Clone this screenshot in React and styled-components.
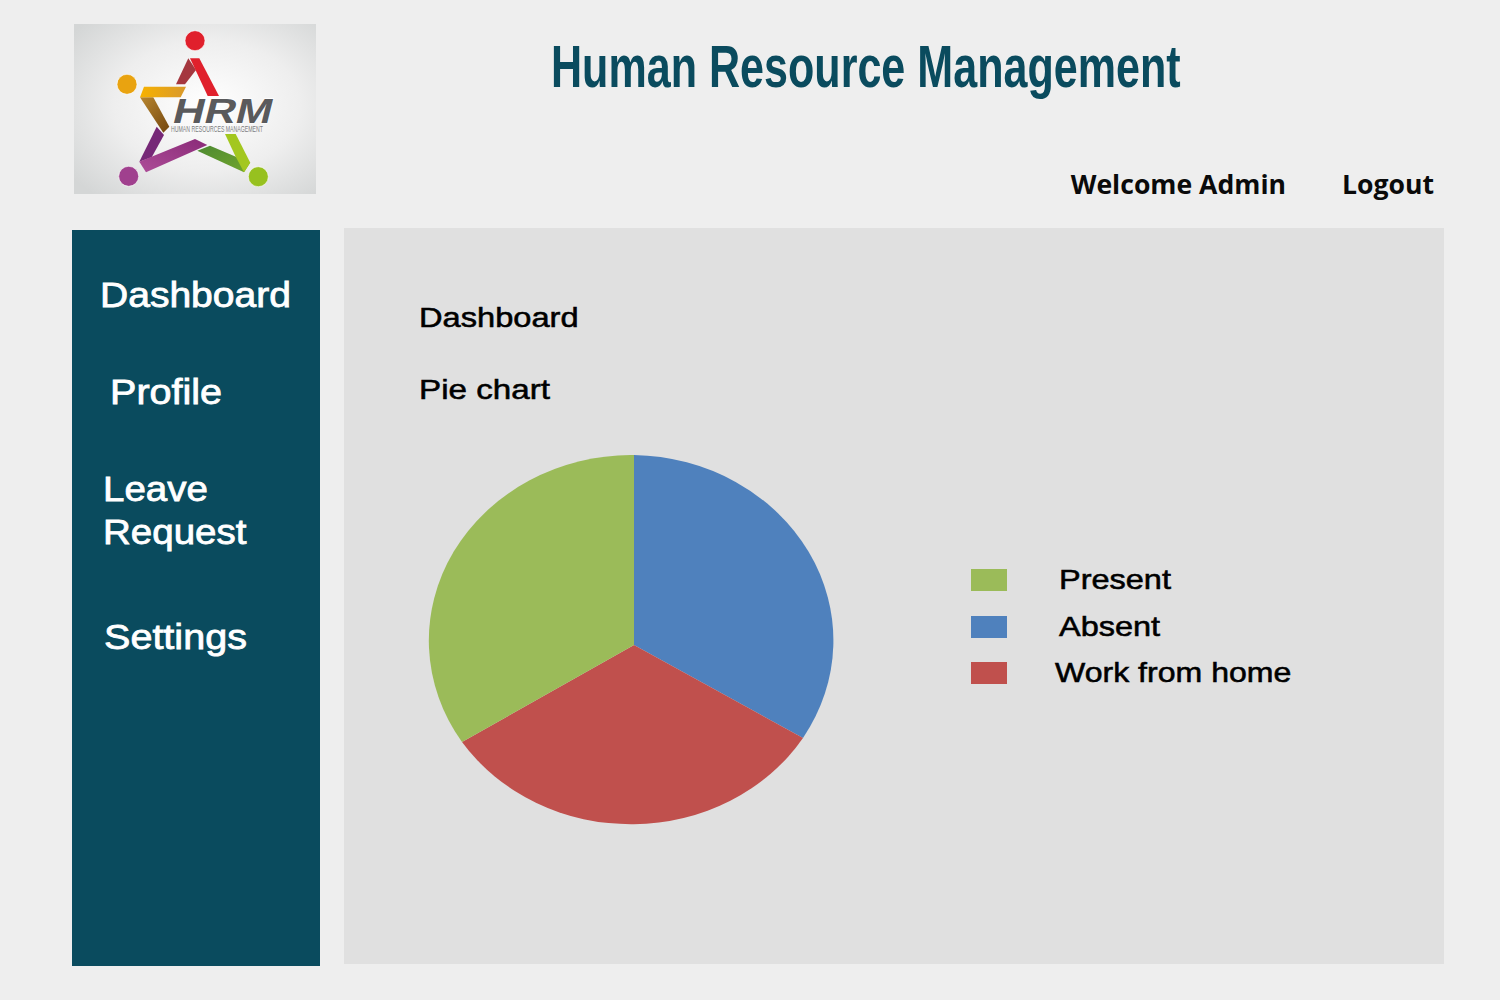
import React from "react";
import styled, { createGlobalStyle } from "styled-components";

const Global = createGlobalStyle`
  html, body { margin: 0; padding: 0; background: #eeeeee; }
  #root { width: 1500px; height: 1000px; overflow: hidden; }
`;

const Page = styled.div`
  width: 1500px;
  height: 1000px;
  box-sizing: border-box;
  padding: 24px 56px 0 72px;
  background: #eeeeee;
  font-family: "Liberation Sans", Arial, sans-serif;
`;

const Header = styled.header`
  display: flex;
  height: 204px;
`;

const LogoBox = styled.div`
  width: 242px;
  height: 170px;
  margin-left: 2px;
  flex: none;
`;

const HeaderRight = styled.div`
  flex: 1;
  display: flex;
  flex-direction: column;
`;

const Title = styled.h1`
  margin: 8px 0 0 235px;
  font-family: "Liberation Sans", Arial, sans-serif;
  font-weight: 700;
  font-size: 60px;
  line-height: 70px;
  color: #0a4b5e;
  white-space: nowrap;
  transform: scaleX(0.718);
  transform-origin: left center;
`;

const UserBar = styled.div`
  display: flex;
  justify-content: flex-end;
  gap: 56px;
  margin-top: 62px;
  padding-right: 10px;
  font-family: "Open Sans", sans-serif;
  font-weight: 700;
  font-size: 26.6px;
  line-height: 40px;
  color: #0a0a0a;
`;

const Body = styled.div`
  display: flex;
  gap: 24px;
  align-items: flex-start;
`;

const Sidebar = styled.nav`
  width: 248px;
  height: 736px;
  margin-top: 2px;
  box-sizing: border-box;
  padding-top: 43px;
  background: #0a4b5e;
  flex: none;
`;

const NavItem = styled.div`
  font-size: 35px;
  line-height: 43px;
  color: #ffffff;
  -webkit-text-stroke: 0.8px #ffffff;
  margin-left: ${(p) => p.$indent}px;
  margin-bottom: ${(p) => p.$gap}px;
  width: 170px;
  transform: scaleX(${(p) => p.$scale});
  transform-origin: left center;
`;

const Main = styled.main`
  width: 1100px;
  height: 736px;
  box-sizing: border-box;
  padding: 72px 0 0 75px;
  background: #e0e0e0;
`;

const Heading = styled.div`
  font-size: 28px;
  line-height: 36px;
  color: #000;
  -webkit-text-stroke: 0.55px #000;
  margin-bottom: ${(p) => p.$gap}px;
  transform: scaleX(${(p) => p.$scale});
  transform-origin: left center;
`;

const ChartRow = styled.div`
  display: flex;
  align-items: flex-start;
  margin-left: 9px;
`;

const PieSvg = styled.svg`
  width: 408px;
  height: 372px;
  flex: none;
`;

const Legend = styled.ul`
  list-style: none;
  margin: 102px 0 0 135px;
  padding: 0;
`;

const LegendRow = styled.li`
  display: flex;
  align-items: center;
  height: 46.5px;
`;

const Swatch = styled.span`
  width: 36px;
  height: 22px;
  background: ${(p) => p.$color};
  flex: none;
`;

const LegendLabel = styled.span`
  font-size: 28px;
  color: #000;
  -webkit-text-stroke: 0.55px #000;
  margin-left: ${(p) => p.$offset}px;
  white-space: nowrap;
  transform: scaleX(${(p) => p.$scale});
  transform-origin: left center;
`;

function Logo() {
  return (
    <svg width="242" height="170" viewBox="0 0 242 170">
      <defs>
        <radialGradient id="bg" cx="55%" cy="48%" r="70%">
          <stop offset="0%" stopColor="#ffffff" />
          <stop offset="55%" stopColor="#eeeeee" />
          <stop offset="100%" stopColor="#d4d6d6" />
        </radialGradient>
        <linearGradient id="orange" x1="0" y1="0" x2="1" y2="0">
          <stop offset="0%" stopColor="#f7b200" />
          <stop offset="100%" stopColor="#d9992c" />
        </linearGradient>
        <linearGradient id="brown" x1="0" y1="0" x2="1" y2="1">
          <stop offset="0%" stopColor="#b8862f" />
          <stop offset="100%" stopColor="#74470f" />
        </linearGradient>
        <linearGradient id="purple" x1="0" y1="1" x2="1" y2="0">
          <stop offset="0%" stopColor="#ad4d98" />
          <stop offset="100%" stopColor="#8a2a78" />
        </linearGradient>
        <linearGradient id="greenD" x1="0" y1="0" x2="1" y2="1">
          <stop offset="0%" stopColor="#4d8a32" />
          <stop offset="100%" stopColor="#72a52c" />
        </linearGradient>
      </defs>
      <rect width="242" height="170" fill="url(#bg)" />
      <circle cx="121" cy="16.7" r="10" fill="#e0202c" stroke="#fff" strokeWidth="0.6" />
      <circle cx="53" cy="60.3" r="10" fill="#e9a310" stroke="#fff" strokeWidth="0.6" />
      <circle cx="54.7" cy="152.3" r="10" fill="#a0408e" stroke="#fff" strokeWidth="0.6" />
      <circle cx="184.3" cy="152.7" r="10" fill="#97c11f" stroke="#fff" strokeWidth="0.6" />
      <polygon points="102,60.3 114.3,34.3 122,46 111,60.3" fill="#a5373f" />
      <polygon points="116,34.3 125.3,34.3 145,72 133.7,72" fill="#e0202c" />
      <polygon points="66,73.3 79.3,73.3 95.3,102.7 89.3,108.7" fill="url(#brown)" />
      <polygon points="70,62.7 112,62.7 106.7,73.3 66,73.3" fill="url(#orange)" />
      <polygon points="82.7,102.7 90,111 77.7,133.3 65.3,137.7" fill="#762877" />
      <polygon points="65.3,137.7 121,115 133.3,121 72,148.3" fill="url(#purple)" />
      <polygon points="123.3,126.7 136,121.7 176,138.7 170,148.3" fill="url(#greenD)" />
      <polygon points="151,110 161.7,110 176.3,138.7 170,148.3 161.7,132.7" fill="#a3c71f" />
      <g transform="translate(97 99) skewX(-14)">
        <text x="0" y="0" fontFamily="Liberation Sans, sans-serif" fontWeight="700" fontSize="35" textLength="99" lengthAdjust="spacingAndGlyphs" fill="#5a5a5c" stroke="#ffffff" strokeWidth="1.2" paintOrder="stroke">HRM</text>
      </g>
      <g transform="translate(97 108) scale(1 1.4)">
        <text x="0" y="0" fontFamily="Liberation Sans, sans-serif" fontSize="6" textLength="92" lengthAdjust="spacingAndGlyphs" fill="#7c7d7f">HUMAN RESOURCES MANAGEMENT</text>
      </g>
    </svg>
  );
}

function Pie() {
  return (
    <PieSvg viewBox="428 455 408 372">
      <path d="M634 645 L634 455 A203.5 185.5 0 0 1 803 738 Z" fill="#4f81bd" />
      <path d="M634 645 L803 738 A203.5 185.5 0 0 1 462 742 Z" fill="#c0504d" />
      <path d="M634 645 L462 742 A203.5 185.5 0 0 1 634 455 Z" fill="#9bbb59" />
    </PieSvg>
  );
}

const legend = [
  { label: "Present", color: "#9bbb59", offset: 52, scale: 1.16 },
  { label: "Absent", color: "#4f81bd", offset: 52, scale: 1.16 },
  { label: "Work from home", color: "#c0504d", offset: 48, scale: 1.145 },
];

export default function App() {
  return (
    <Page>
      <Global />
      <Header>
        <LogoBox><Logo /></LogoBox>
        <HeaderRight>
          <Title>Human Resource Management</Title>
          <UserBar><span>Welcome Admin</span><span>Logout</span></UserBar>
        </HeaderRight>
      </Header>
      <Body>
        <Sidebar>
          <NavItem $indent={28} $gap={54} $scale={1.115}>Dashboard</NavItem>
          <NavItem $indent={38} $gap={54} $scale={1.13}>Profile</NavItem>
          <NavItem $indent={31} $gap={62} $scale={1.1}>Leave Request</NavItem>
          <NavItem $indent={32} $gap={0} $scale={1.13}>Settings</NavItem>
        </Sidebar>
        <Main>
          <Heading $gap={36} $scale={1.165}>Dashboard</Heading>
          <Heading $gap={47} $scale={1.185}>Pie chart</Heading>
          <ChartRow>
            <Pie />
            <Legend>
              {legend.map((l) => (
                <LegendRow key={l.label}>
                  <Swatch $color={l.color} />
                  <LegendLabel $offset={l.offset} $scale={l.scale}>{l.label}</LegendLabel>
                </LegendRow>
              ))}
            </Legend>
          </ChartRow>
        </Main>
      </Body>
    </Page>
  );
}
